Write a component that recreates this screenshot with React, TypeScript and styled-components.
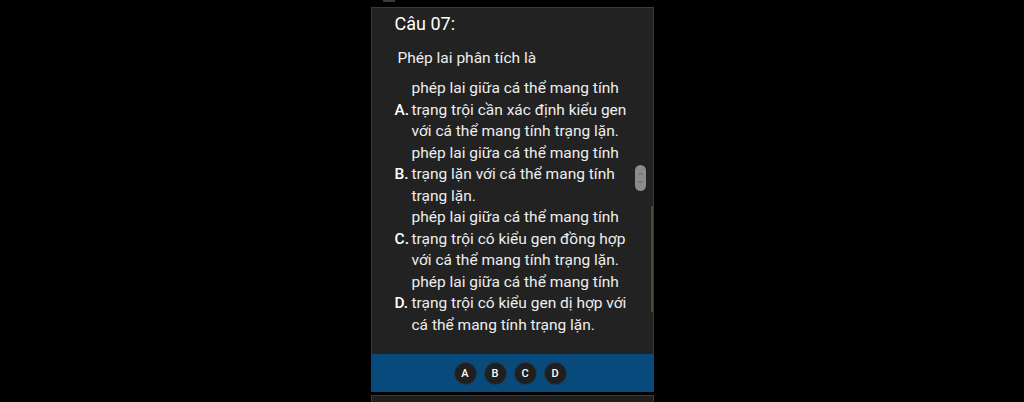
import * as React from "react";
import styled, { createGlobalStyle } from "styled-components";

const GlobalStyle = createGlobalStyle`
  html, body {
    margin: 0;
    padding: 0;
    background: #000;
  }
  body {
    font-family: Roboto, "Noto Sans", "Liberation Sans", sans-serif;
    color: #f2f2f2;
    overflow: hidden;
    height: 402px;
  }
`;

const Page = styled.main`
  width: 1024px;
  display: flex;
  flex-direction: column;
  align-items: center;

  & > * {
    flex: none;
  }
`;

const TopStub = styled.div`
  width: 283px;
  height: 7px;
  display: flex;

  &::before {
    content: "";
    margin-left: 12px;
    width: 12px;
    height: 2px;
    background: #3a3a3a;
  }
`;

const Card = styled.section`
  position: relative;
  width: 281px;
  background: #222222;
  border: 1px solid #3a3a3a;
  border-bottom: none;
  display: flex;
  flex-direction: column;
`;

const Body = styled.div`
  padding: 4px 14px 18px 23px;
  display: flex;
  flex-direction: column;
`;

const Title = styled.h2`
  margin: 0;
  font-size: 18px;
  font-weight: 400;
  line-height: 24px;
  color: #ffffff;
`;

const Question = styled.p`
  margin: 11px 0 9px 3px;
  font-size: 15.5px;
  line-height: 22px;
  color: #eeeeee;
`;

const OptionList = styled.div`
  display: flex;
  flex-direction: column;
`;

const OptionRow = styled.div`
  display: flex;
  align-items: center;
`;

const OptionLetter = styled.span`
  width: 17px;
  flex: none;
  font-size: 15.5px;
  font-weight: 500;
  line-height: 21.5px;
  color: #ffffff;
`;

const OptionText = styled.span`
  width: 235px;
  font-size: 15.5px;
  line-height: 21.5px;
  color: #eeeeee;
`;

const AnswerBar = styled.div`
  height: 38px;
  background: #074a7b;
  display: flex;
  align-items: center;
  justify-content: center;
  gap: 7px;
  padding-right: 4px;
`;

const AnswerButton = styled.button`
  width: 23px;
  height: 23px;
  border-radius: 50%;
  border: 1px solid #1c3a52;
  background: #1f1f1f;
  color: #ffffff;
  font-family: Roboto, "Liberation Sans", sans-serif;
  font-size: 11px;
  font-weight: 500;
  padding: 0;
  display: flex;
  align-items: center;
  justify-content: center;
`;

const ScrollThumb = styled.div`
  position: absolute;
  left: 263px;
  top: 157px;
  width: 11px;
  height: 26px;
  border-radius: 6px;
  background: #8c8c8c;
  display: flex;
  align-items: center;
  justify-content: center;
`;

const ScrollTrack = styled.div`
  position: absolute;
  right: 0;
  top: 198px;
  width: 2px;
  height: 106px;
  background: #4a4a2c;
`;

const NextCard = styled.div`
  margin-top: 3px;
  width: 281px;
  height: 20px;
  background: #1e1e1e;
  border: 1px solid #3a3a3a;
`;

const options: { key: string; text: string }[] = [
  {
    key: "A",
    text: "phép lai giữa cá thể mang tính trạng trội cần xác định kiểu gen với cá thể mang tính trạng lặn.",
  },
  {
    key: "B",
    text: "phép lai giữa cá thể mang tính trạng lặn với cá thể mang tính trạng lặn.",
  },
  {
    key: "C",
    text: "phép lai giữa cá thể mang tính trạng trội có kiểu gen đồng hợp với cá thể mang tính trạng lặn.",
  },
  {
    key: "D",
    text: "phép lai giữa cá thể mang tính trạng trội có kiểu gen dị hợp với cá thể mang tính trạng lặn.",
  },
];

const App = () => {
  return (
    <Page>
      <GlobalStyle />
      <TopStub />
      <Card>
        <Body>
          <Title>Câu 07:</Title>
          <Question>Phép lai phân tích là</Question>
          <OptionList>
            {options.map((o) => (
              <OptionRow key={o.key}>
                <OptionLetter>{o.key}.</OptionLetter>
                <OptionText>{o.text}</OptionText>
              </OptionRow>
            ))}
          </OptionList>
        </Body>
        <AnswerBar>
          {options.map((o) => (
            <AnswerButton key={o.key}>{o.key}</AnswerButton>
          ))}
        </AnswerBar>
        <ScrollThumb>
          <svg width="7" height="18" viewBox="0 0 7 18" fill="none">
            <path d="M1.5 6 L3.5 4 L5.5 6" stroke="#5e5e5e" strokeWidth="1" />
            <path d="M1.5 12 L3.5 14 L5.5 12" stroke="#5e5e5e" strokeWidth="1" />
          </svg>
        </ScrollThumb>
        <ScrollTrack />
      </Card>
      <NextCard />
    </Page>
  );
};

export default App;
